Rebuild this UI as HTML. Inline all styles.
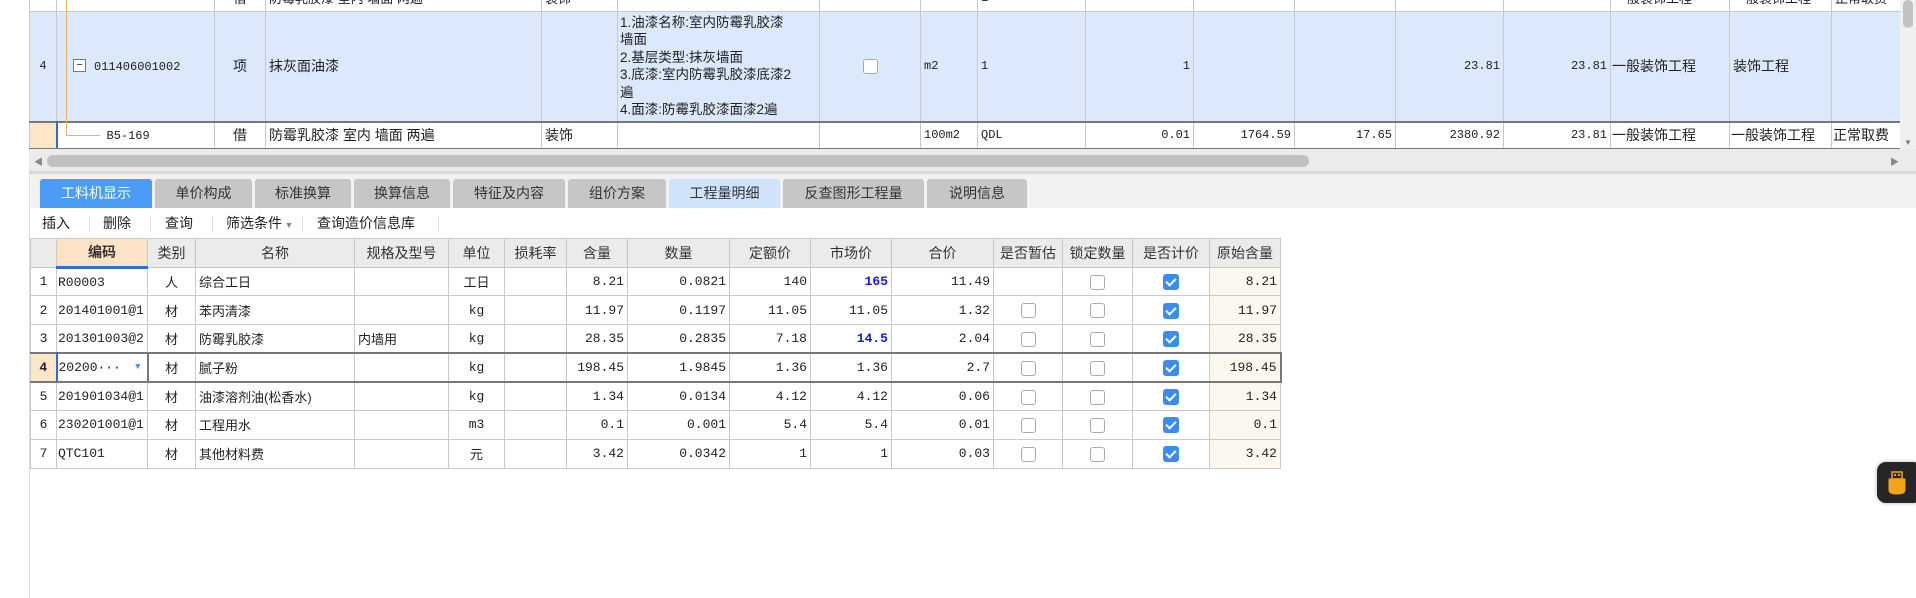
<!DOCTYPE html>
<html><head><meta charset="utf-8">
<style>
*{box-sizing:border-box;margin:0;padding:0}
body{width:1916px;height:598px;overflow:hidden;background:#fff;font-family:"Liberation Sans","Noto Sans CJK SC",sans-serif;font-size:13px;color:#222;position:relative}
.abs{position:absolute}
table{border-collapse:collapse;table-layout:fixed;position:absolute}
td{border:1px solid #c9c9c9;padding:0 3px;white-space:nowrap;overflow:hidden;vertical-align:middle}
.n{font-family:"Liberation Mono","Noto Sans CJK SC",monospace;font-size:12px}
.r{text-align:right}
.c{text-align:center}
.hl td{background:#dce8fb}
.sel td{border-top:2px solid #777;border-bottom:2px solid #777}
.gut{background:#fde6c8 !important}
.cb{display:inline-block;width:15px;height:15px;border:1px solid #aaa;border-radius:3px;background:#fff;vertical-align:middle}
.ck{display:inline-block;width:16px;height:16px;border-radius:3px;background:#3b8cf0;vertical-align:middle;position:relative}
.ck:after{content:"";position:absolute;left:5px;top:2px;width:4px;height:8px;border:solid #fff;border-width:0 2px 2px 0;transform:rotate(45deg)}
.tab{position:absolute;top:179px;height:29px;background:#c6c6c6;color:#333;font-size:14px;text-align:center;line-height:29px;border-radius:3px 3px 0 0}
.tb{position:absolute;top:210px;font-size:14px;line-height:26px}
.sep{position:absolute;top:216px;width:1px;height:16px;background:#ddd}
.bt td{height:28.7px;font-size:13px}
.bt .hd td{background:#ebebeb;text-align:center;font-size:14px;color:#333}
.bl{color:#1818e0;font-weight:bold}
.cr{background:#fdf8ef}
</style></head><body>

<div class="abs" style="left:0;top:0;width:29px;height:171px;background:#fff"></div>
<table style="left:29px;top:-17px;width:1871px">
<colgroup><col style="width:27px"><col style="width:158px"><col style="width:51px"><col style="width:276px"><col style="width:76px"><col style="width:202px"><col style="width:101px"><col style="width:57px"><col style="width:108px"><col style="width:108px"><col style="width:101px"><col style="width:101px"><col style="width:108px"><col style="width:107px"><col style="width:119px"><col style="width:102px"><col style="width:69px"></colgroup>
<tr style="height:28px"><td></td><td></td><td class="c">借</td><td>防霉乳胶漆 室内 墙面 两遍</td><td>装饰</td><td></td><td></td><td></td><td class="n">1</td><td></td><td></td><td></td><td></td><td></td><td>一般装饰工程</td><td>一般装饰工程</td><td>正常取费</td></tr>
<tr class="hl" style="height:110px"><td class="c n">4</td><td style="position:relative"><span class="abs" style="left:16px;top:47px;width:13px;height:13px;border:1px solid #777;background:#fff;font-size:11px;line-height:10px;text-align:center">−</span><span class="n" style="padding-left:34px">011406001002</span></td><td class="c" style="font-size:14px">项</td><td style="font-size:14px">抹灰面油漆</td><td></td><td style="font-size:13.5px;line-height:17.5px;padding:0 2px">1.油漆名称:室内防霉乳胶漆<br>墙面<br>2.基层类型:抹灰墙面<br>3.底漆:室内防霉乳胶漆底漆2<br>遍<br>4.面漆:防霉乳胶漆面漆2遍</td><td class="c"><span class="cb"></span></td><td class="n">m2</td><td class="n">1</td><td class="n r">1</td><td></td><td></td><td class="n r">23.81</td><td class="n r">23.81</td><td style="font-size:14px;padding:0 1px">一般装饰工程</td><td style="font-size:14px">装饰工程</td><td></td></tr>
<tr class="sel" style="height:27px"><td class="gut" style="border-right:2px solid #2a6fd6"></td><td><span class="n" style="padding-left:46px">B5-169</span></td><td class="c" style="font-size:14px">借</td><td style="font-size:14px">防霉乳胶漆 室内 墙面 两遍</td><td style="font-size:14px">装饰</td><td></td><td></td><td class="n">100m2</td><td class="n">QDL</td><td class="n r">0.01</td><td class="n r">1764.59</td><td class="n r">17.65</td><td class="n r">2380.92</td><td class="n r">23.81</td><td style="font-size:14px;padding:0 1px">一般装饰工程</td><td style="font-size:14px;padding:0 1px">一般装饰工程</td><td style="font-size:14px;padding:0 1px">正常取费</td></tr>
</table>
<div class="abs" style="left:66px;top:0;width:1px;height:135px;background:#f0b060"></div>
<div class="abs" style="left:66px;top:135px;width:34px;height:1px;background:#f0b060"></div>
<div class="abs" style="left:1900px;top:0;width:16px;height:150px;background:#f0f0f0"></div>
<div class="abs" style="left:1903px;top:0;width:10px;height:28px;background:#c2c2c2;border-radius:5px"></div>
<div class="abs" style="left:1904px;top:138px;font-size:8px;color:#777">▼</div>
<div class="abs" style="left:29px;top:149px;width:1887px;height:22px;background:#ebebeb"></div>
<div class="abs" style="left:47px;top:155px;width:1262px;height:12px;background:#c0c0c0;border-radius:6px"></div>
<div class="abs" style="left:34px;top:155px;font-size:9px;color:#888">◀</div>
<div class="abs" style="left:1890px;top:155px;font-size:9px;color:#888">▶</div>
<div class="abs" style="left:29px;top:171px;width:1887px;height:3px;background:#d8d8d8"></div>

<div class="abs" style="left:29px;top:174px;width:1px;height:424px;background:#ddd"></div>
<div class="abs" style="left:30px;top:174px;width:1886px;height:34px;background:#f2f2f2"></div>
<div class="tab" style="left:40px;width:112px;background:#4a9cf5;color:#fff">工料机显示</div>
<div class="tab" style="left:155px;width:97px">单价构成</div>
<div class="tab" style="left:255px;width:96px">标准换算</div>
<div class="tab" style="left:354px;width:96px">换算信息</div>
<div class="tab" style="left:453px;width:112px">特征及内容</div>
<div class="tab" style="left:568px;width:98px">组价方案</div>
<div class="tab" style="left:669px;width:111px;background:#cfe3fb">工程量明细</div>
<div class="tab" style="left:783px;width:141px">反查图形工程量</div>
<div class="tab" style="left:927px;width:100px">说明信息</div>

<div class="tb" style="left:42px">插入</div><div class="sep" style="left:89px"></div>
<div class="tb" style="left:103px">删除</div><div class="sep" style="left:150px"></div>
<div class="tb" style="left:165px">查询</div><div class="sep" style="left:212px"></div>
<div class="tb" style="left:226px">筛选条件<span style="font-size:9px;color:#888"> ▼</span></div><div class="sep" style="left:302px"></div>
<div class="tb" style="left:317px">查询造价信息库</div><div class="sep" style="left:438px"></div>

<table class="bt" style="left:30px;top:238px;width:1250px">
<colgroup><col style="width:26px"><col style="width:91px"><col style="width:48px"><col style="width:159px"><col style="width:94px"><col style="width:56px"><col style="width:62px"><col style="width:61px"><col style="width:102px"><col style="width:81px"><col style="width:81px"><col style="width:102px"><col style="width:69px"><col style="width:70px"><col style="width:77px"><col style="width:71px"></colgroup>
<tr class="hd" style="height:28px"><td></td><td style="background:#fde3c5;font-weight:bold;border-bottom:3px solid #2a6fd6">编码</td><td>类别</td><td>名称</td><td>规格及型号</td><td>单位</td><td>损耗率</td><td>含量</td><td>数量</td><td>定额价</td><td>市场价</td><td>合价</td><td style="padding:0">是否暂估</td><td style="padding:0">锁定数量</td><td>是否计价</td><td>原始含量</td></tr>
<tr><td class="c n">1</td><td class="n" style="padding:0 1px">R00003</td><td class="c">人</td><td>综合工日</td><td></td><td class="c">工日</td><td></td><td class="n r">8.21</td><td class="n r">0.0821</td><td class="n r">140</td><td class="n r bl">165</td><td class="n r">11.49</td><td></td><td class="c"><span class="cb"></span></td><td class="c"><span class="ck"></span></td><td class="n r cr">8.21</td></tr>
<tr><td class="c n">2</td><td class="n" style="padding:0 1px">201401001@1</td><td class="c">材</td><td>苯丙清漆</td><td></td><td class="c n">kg</td><td></td><td class="n r">11.97</td><td class="n r">0.1197</td><td class="n r">11.05</td><td class="n r">11.05</td><td class="n r">1.32</td><td class="c"><span class="cb"></span></td><td class="c"><span class="cb"></span></td><td class="c"><span class="ck"></span></td><td class="n r cr">11.97</td></tr>
<tr><td class="c n">3</td><td class="n" style="padding:0 1px">201301003@2</td><td class="c">材</td><td>防霉乳胶漆</td><td>内墙用</td><td class="c n">kg</td><td></td><td class="n r">28.35</td><td class="n r">0.2835</td><td class="n r">7.18</td><td class="n r bl">14.5</td><td class="n r">2.04</td><td class="c"><span class="cb"></span></td><td class="c"><span class="cb"></span></td><td class="c"><span class="ck"></span></td><td class="n r cr">28.35</td></tr>
<tr class="sel"><td class="c n gut" style="font-weight:bold;border-right:2px solid #2a6fd6">4</td><td class="n" style="padding:0 1px;border:2px solid #777;position:relative">20200···<span class="abs" style="color:#4a8fd8;font-size:9px;right:6px;top:8px">▼</span></td><td class="c">材</td><td>腻子粉</td><td></td><td class="c n">kg</td><td></td><td class="n r">198.45</td><td class="n r">1.9845</td><td class="n r">1.36</td><td class="n r">1.36</td><td class="n r">2.7</td><td class="c"><span class="cb"></span></td><td class="c"><span class="cb"></span></td><td class="c"><span class="ck"></span></td><td class="n r cr" style="border-right:2px solid #777">198.45</td></tr>
<tr><td class="c n">5</td><td class="n" style="padding:0 1px">201901034@1</td><td class="c">材</td><td>油漆溶剂油(松香水)</td><td></td><td class="c n">kg</td><td></td><td class="n r">1.34</td><td class="n r">0.0134</td><td class="n r">4.12</td><td class="n r">4.12</td><td class="n r">0.06</td><td class="c"><span class="cb"></span></td><td class="c"><span class="cb"></span></td><td class="c"><span class="ck"></span></td><td class="n r cr">1.34</td></tr>
<tr><td class="c n">6</td><td class="n" style="padding:0 1px">230201001@1</td><td class="c">材</td><td>工程用水</td><td></td><td class="c n">m3</td><td></td><td class="n r">0.1</td><td class="n r">0.001</td><td class="n r">5.4</td><td class="n r">5.4</td><td class="n r">0.01</td><td class="c"><span class="cb"></span></td><td class="c"><span class="cb"></span></td><td class="c"><span class="ck"></span></td><td class="n r cr">0.1</td></tr>
<tr><td class="c n">7</td><td class="n" style="padding:0 1px">QTC101</td><td class="c">材</td><td>其他材料费</td><td></td><td class="c">元</td><td></td><td class="n r">3.42</td><td class="n r">0.0342</td><td class="n r">1</td><td class="n r">1</td><td class="n r">0.03</td><td class="c"><span class="cb"></span></td><td class="c"><span class="cb"></span></td><td class="c"><span class="ck"></span></td><td class="n r cr">3.42</td></tr>
</table>

<div class="abs" style="left:1877px;top:462px;width:45px;height:41px;background:#262626;border-radius:9px;box-shadow:0 0 4px rgba(0,0,0,.3)"></div>
<svg class="abs" style="left:1885px;top:470px" width="24" height="26" viewBox="0 0 24 26">
<rect x="7" y="2" width="10" height="7" fill="none" stroke="#f7a21b" stroke-width="1.5"/>
<rect x="9" y="4" width="2" height="2" fill="#f7a21b"/><rect x="13" y="4" width="2" height="2" fill="#f7a21b"/>
<path d="M4 9 H20 V20 Q20 24 12 24 Q4 24 4 20 Z" fill="#f7a21b" stroke="#f7a21b"/>
</svg>
</body></html>
